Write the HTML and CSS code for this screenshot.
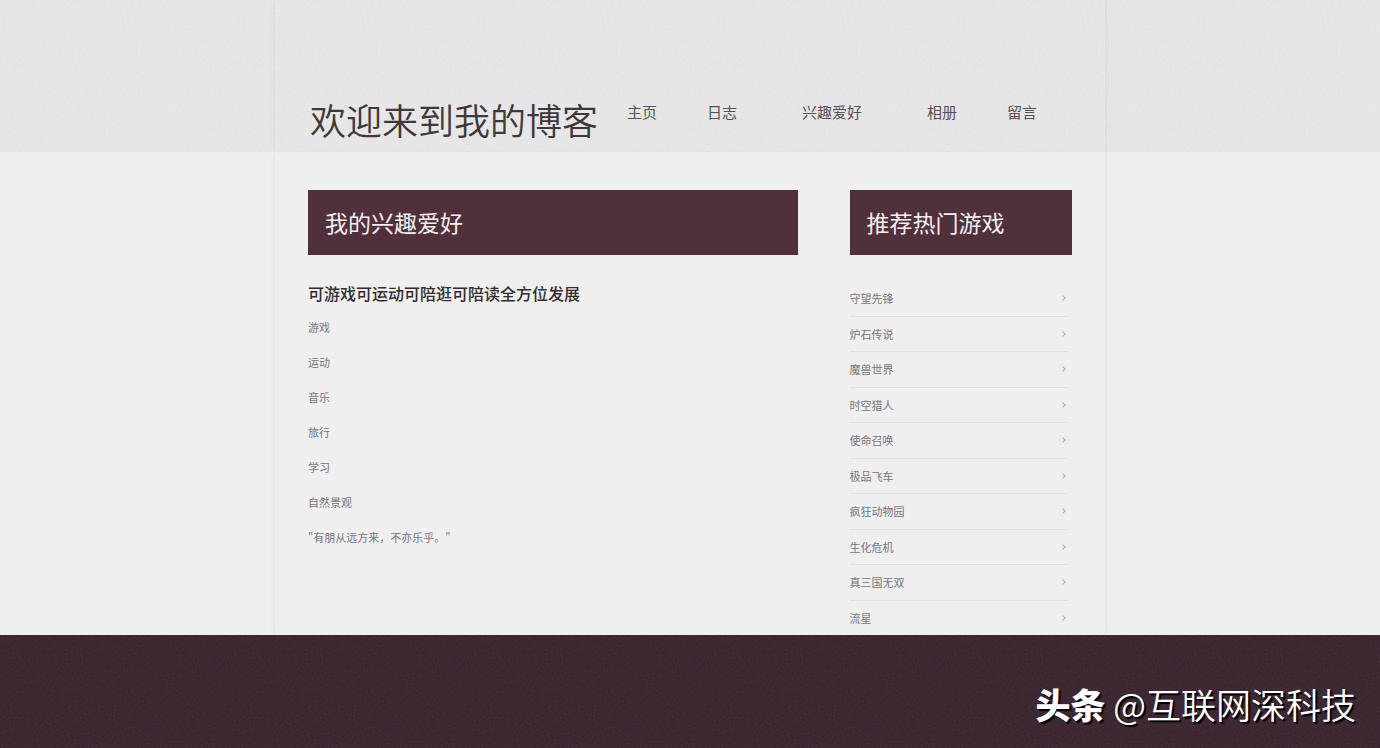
FILE: index.html
```
<!DOCTYPE html>
<html lang="zh-CN">
<head>
    <meta charset="UTF-8">
    <meta name="viewport" content="width=device-width, initial-scale=1.0">
    <title>欢迎来到我的博客</title>
    <link rel="stylesheet" href="styles.css">
</head>
<body>
    <header class="header">
        <div class="wrap header-inner">
            <h1>欢迎来到我的博客</h1>
            <nav class="nav">
                <a href="#">主页</a>
                <a href="#">日志</a>
                <a href="#" class="current">兴趣爱好</a>
                <a href="#">相册</a>
                <a href="#">留言</a>
            </nav>
        </div>
    </header>

    <div class="wrap content">
        <main class="main">
            <h2>我的兴趣爱好</h2>
            <h3>可游戏可运动可陪逛可陪读全方位发展</h3>
            <p>游戏</p>
            <p>运动</p>
            <p>音乐</p>
            <p>旅行</p>
            <p>学习</p>
            <p>自然景观</p>
            <p>"有朋从远方来，不亦乐乎。"</p>
        </main>
        <aside class="sidebar">
            <h2>推荐热门游戏</h2>
            <ul>
                <li><a href="#">守望先锋</a></li>
                <li><a href="#">炉石传说</a></li>
                <li><a href="#">魔兽世界</a></li>
                <li><a href="#">时空猎人</a></li>
                <li><a href="#">使命召唤</a></li>
                <li><a href="#">极品飞车</a></li>
                <li><a href="#">疯狂动物园</a></li>
                <li><a href="#">生化危机</a></li>
                <li><a href="#">真三国无双</a></li>
                <li><a href="#">流星</a></li>
            </ul>
        </aside>
    </div>

    <footer class="footer">
        <p class="credit"><strong>头条</strong> @互联网深科技</p>
    </footer>
</body>
</html>
```
FILE: styles.css
```
* {
    margin: 0;
    padding: 0;
    box-sizing: border-box;
}

body {
    display: flex;
    flex-direction: column;
    min-height: 100vh;
    background-color: #efeff0;
    font-family: "Noto Sans CJK SC", sans-serif;
    color: #77757a;
}

a {
    color: inherit;
    text-decoration: none;
}

.wrap {
    width: 100%;
    max-width: 832px;
    margin: 0 auto;
    padding: 0 33px;
    border-left: 1px solid #e7e6ea;
    border-right: 1px solid #e7e6ea;
    box-shadow: -5px 0 8px -5px rgba(60, 50, 70, 0.05), 5px 0 8px -5px rgba(60, 50, 70, 0.05);
}

/* header */
.header {
    background-color: #e9e9ea;
    background-image: url("data:image/svg+xml,%3Csvg xmlns='http://www.w3.org/2000/svg' width='240' height='240'%3E%3Cfilter id='n'%3E%3CfeTurbulence type='fractalNoise' baseFrequency='.5' numOctaves='3' stitchTiles='stitch'/%3E%3CfeColorMatrix type='saturate' values='0'/%3E%3C/filter%3E%3Crect width='240' height='240' filter='url(%23n)' opacity='.12'/%3E%3C/svg%3E");
}

.header-inner {
    display: flex;
    align-items: flex-start;
    padding-top: 92px;
    padding-bottom: 6px;
    border-color: #dedee0;
}

h1 {
    padding-left: 2px;
    font-size: 36px;
    line-height: 54px;
    font-weight: 350;
    color: #3f3738;
    white-space: nowrap;
}

.nav {
    display: flex;
    margin-left: 4px;
    font-size: 15px;
    line-height: 40px;
    color: #555154;
    white-space: nowrap;
}

.nav a {
    padding: 0 25px;
}

.nav .current {
    padding: 0 40px;
}

/* content */
.content {
    flex: 1;
    display: grid;
    grid-template-columns: 11fr 5fr;
    gap: 52px;
    padding-top: 38px;
}

h2 {
    padding: 0 17px;
    background-color: #4f303b;
    color: #f4eff1;
    font-size: 23px;
    line-height: 65px;
    font-weight: 400;
}

h3 {
    margin: 26px 0 12px;
    font-size: 16px;
    line-height: 24px;
    font-weight: 500;
    color: #302c2f;
}

.main p {
    margin-bottom: 15px;
    font-size: 11px;
    line-height: 20px;
}

.sidebar {
    display: flex;
    flex-direction: column;
}

.sidebar ul {
    flex: 1;
    display: flex;
    flex-direction: column;
    margin: 26px 3px 0 0;
    list-style: none;
    font-size: 11px;
    line-height: 16px;
}

.sidebar li {
    flex: 1;
    display: flex;
    border-bottom: 1px solid #e2e0e3;
}

.sidebar li:last-child {
    border-bottom: none;
}

.sidebar li a {
    flex: 1;
    display: flex;
    justify-content: space-between;
    align-items: center;
}

/* small arrow at the end of each row */
.sidebar li a::after {
    content: "";
    width: 3px;
    height: 3px;
    margin-right: 4px;
    border-top: 1px solid #b0aeb2;
    border-right: 1px solid #b0aeb2;
    transform: rotate(45deg);
}

/* footer */
.footer {
    display: flex;
    justify-content: flex-end;
    padding: 42px 24px 17px;
    background-color: #37202b;
    background-image: url("data:image/svg+xml,%3Csvg xmlns='http://www.w3.org/2000/svg' width='240' height='240'%3E%3Cfilter id='n'%3E%3CfeTurbulence type='fractalNoise' baseFrequency='.5' numOctaves='3' stitchTiles='stitch'/%3E%3CfeColorMatrix type='saturate' values='0'/%3E%3C/filter%3E%3Crect width='240' height='240' filter='url(%23n)' opacity='.1'/%3E%3C/svg%3E");
}

.credit {
    color: #fff;
    font-size: 35px;
    line-height: 54px;
    font-weight: 350;
    text-shadow: 2px 2px 1px #000;
}

.credit strong {
    font-weight: 900;
}
```
